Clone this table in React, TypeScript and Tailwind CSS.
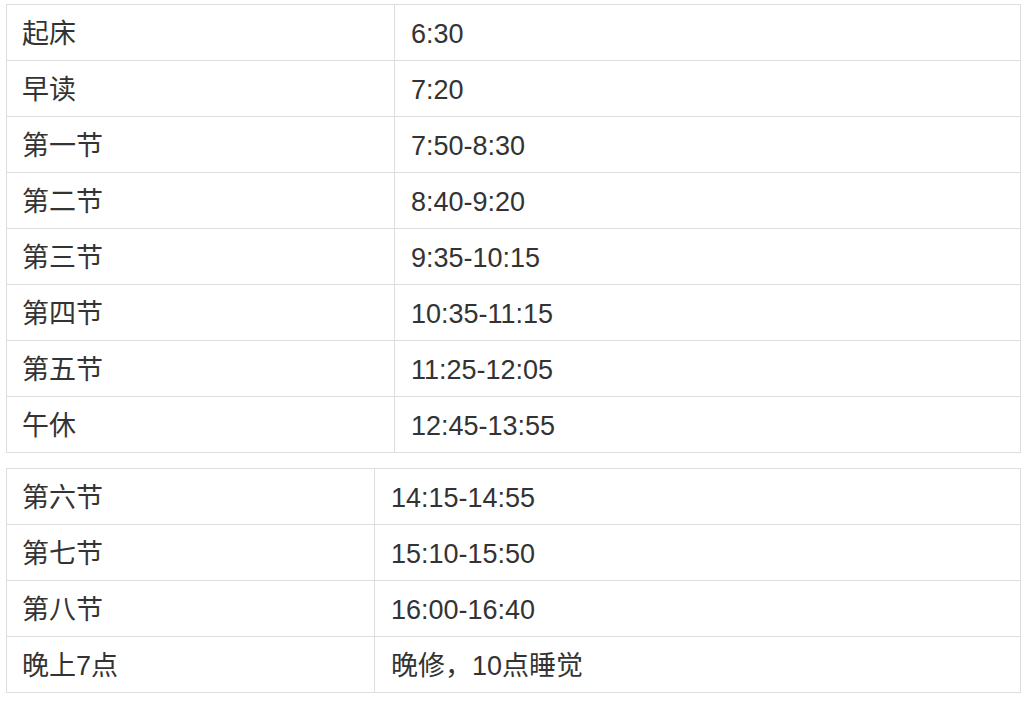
const morning: [string, string][] = [
  ['起床', '6:30'],
  ['早读', '7:20'],
  ['第一节', '7:50-8:30'],
  ['第二节', '8:40-9:20'],
  ['第三节', '9:35-10:15'],
  ['第四节', '10:35-11:15'],
  ['第五节', '11:25-12:05'],
  ['午休', '12:45-13:55'],
];

const afternoon: [string, string][] = [
  ['第六节', '14:15-14:55'],
  ['第七节', '15:10-15:50'],
  ['第八节', '16:00-16:40'],
  ['晚上7点', '晚修，10点睡觉'],
];

function Schedule({
  rows,
  firstCol,
}: Readonly<{ rows: [string, string][]; firstCol: string }>) {
  return (
    <table className="w-[1015px] border-collapse table-fixed">
      <colgroup>
        <col className={firstCol} />
        <col />
      </colgroup>
      <tbody>
        {rows.map(([name, time]) => (
          <tr key={name} className="h-[56px]">
            <td className="border border-[#dddddd] pl-[15px] pt-[3px] align-middle">{name}</td>
            <td className="border border-[#dddddd] pl-[16px] pt-[3px] align-middle">{time}</td>
          </tr>
        ))}
      </tbody>
    </table>
  );
}

export default function App() {
  return (
    <div
      className="w-[1033px] h-[701px] bg-white pl-[6px] pt-[4px] text-[27px] leading-none text-[#333333]"
      style={{ fontFamily: '"Liberation Sans", "Noto Sans CJK SC", sans-serif' }}
    >
      <Schedule rows={morning} firstCol="w-[388px]" />
      <div className="h-[15px]" />
      <Schedule rows={afternoon} firstCol="w-[368px]" />
    </div>
  );
}
